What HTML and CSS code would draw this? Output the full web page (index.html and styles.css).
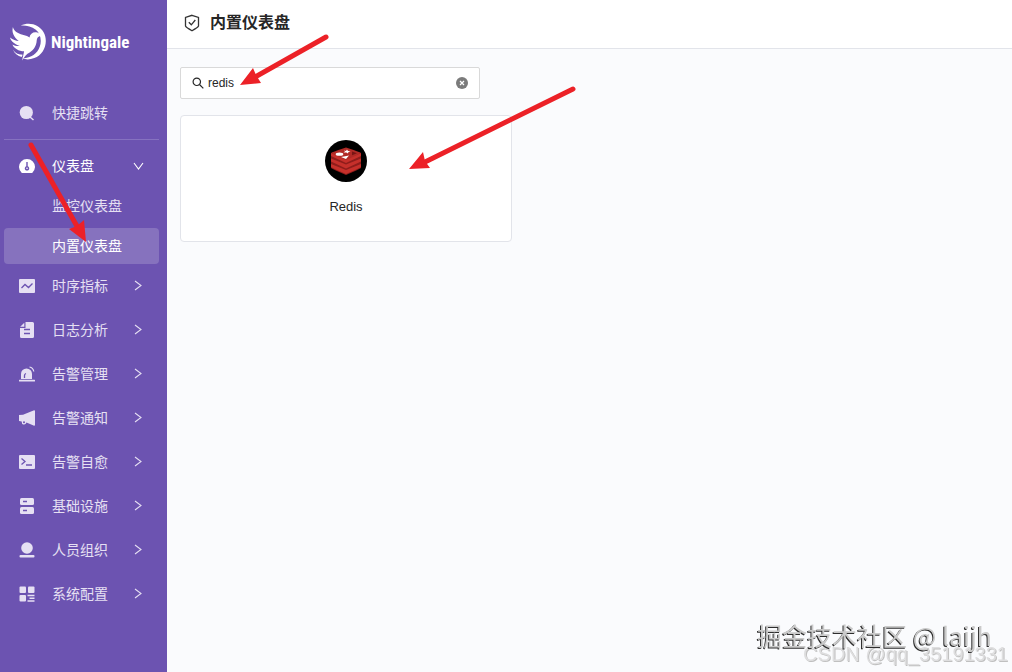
FILE: index.html
```html
<!DOCTYPE html>
<html lang="zh-CN">
<head>
    <meta charset="UTF-8">
    <meta name="viewport" content="width=device-width, initial-scale=1.0">
    <title>内置仪表盘 - Nightingale</title>
    <link rel="stylesheet" href="styles.css">
</head>
<body>
    <!-- Chevron shared by the menu items -->
    <svg class="symbols" aria-hidden="true">
        <symbol id="chevron" viewBox="0 0 12 12">
            <path d="M3 1 L9 5.500 L3 10" fill="none" stroke="currentColor" stroke-width="1.1"/>
        </symbol>
    </svg>

    <div class="layout">
        <!-- Side menu -->
        <aside class="sidebar">
            <a class="logo" href="#">
                <svg class="logo-mark" viewBox="0 0 38 38" aria-hidden="true">
                    <path d="M11 2 C20 -2 30 1 34.500 9 C40 19 35 32 25 35.500 C20 37.500 16 37 13 36 C22 35.500 28 31 30.500 24 C33 17 31 10 26.500 6.500 C22 2.500 16 1.700 11 2 Z"/>
                    <path d="M3 3.500 C4 8 8 10 13 11.500 C17 12.500 18.500 13 20 14.500 C20.500 11 23 9 26 9 C29 9 30 10.500 34 12.500 C30 12.500 28 13.500 27.500 17 C27 25 23 28.500 18 31 C15.500 33 14 35.500 12.500 38 C13 34.500 14 31.500 14.500 28.500 C9 28.500 4 25.500 2.500 21.500 C5 23 8 23.300 10 23 C5 21.500 1 18.500 0 14.500 C3 17 6 18 9 18 C4 14 1.500 9 3 3.500 Z"/>
                    <path d="M3 27 C6 31 9 32 13 32 L12 34.500 C8 33.500 5 31 3 27 Z"/>
                </svg>
                <span class="logo-text">Nightingale</span>
            </a>

            <nav>
                <div class="quick">
                    <button class="menu-item" type="button">
                        <svg class="icon" viewBox="0 0 16 16"><circle cx="7.300" cy="7.500" r="6.600"/><path d="M11 12 L14.500 15" stroke="currentColor" stroke-width="1.500"/></svg>
                        <span>快捷跳转</span>
                    </button>
                </div>

                <ul class="menu">
                    <li class="open">
                        <button class="menu-item active" type="button" aria-expanded="true">
                            <svg class="icon" viewBox="0 0 16 16"><path fill-rule="evenodd" d="M2.800 15 A8 8 0 1 1 13.200 15 Z M7.300 4 V8.300 A2.200 2.200 0 1 0 8.700 8.300 V4 Z"/><circle cx="8" cy="10.300" r="0.800"/></svg>
                            <span>仪表盘</span>
                            <svg class="arrow arrow-down"><use href="#chevron"/></svg>
                        </button>
                        <ul class="submenu">
                            <li><a href="#">监控仪表盘</a></li>
                            <li><a class="selected" href="#" aria-current="page">内置仪表盘</a></li>
                        </ul>
                    </li>
                    <li>
                        <button class="menu-item" type="button">
                            <svg class="icon" viewBox="0 0 16 16"><rect y="1" width="16" height="14" rx="1"/><path class="cut" d="M2.500 10 L6 6.500 L9.500 9.500 L13.500 5.500"/></svg>
                            <span>时序指标</span>
                            <svg class="arrow"><use href="#chevron"/></svg>
                        </button>
                    </li>
                    <li>
                        <button class="menu-item" type="button">
                            <svg class="icon" viewBox="0 0 16 16"><path d="M6.500 0 H13.500 Q15 0 15 1.500 V14.500 Q15 16 13.500 16 H2.500 Q1 16 1 14.500 V6 H6.500 Z"/><path d="M5.300 0.700 V4.800 H1.200 Z"/><path class="cut" d="M5 7.500 H11 M5 11.500 H11"/></svg>
                            <span>日志分析</span>
                            <svg class="arrow"><use href="#chevron"/></svg>
                        </button>
                    </li>
                    <li>
                        <button class="menu-item" type="button">
                            <svg class="icon" viewBox="0 0 16 16"><path d="M2 13 V8 A5.500 5.500 0 0 1 13 8 V13 Z"/><rect y="13.700" width="16" height="1.800" rx="0.500"/><path d="M10.500 1 Q14 1.500 14.800 5.500" fill="none" stroke="currentColor" stroke-width="1.200"/><path class="cut" d="M5.500 12 V9.500 Q5.500 8 7 7.500"/></svg>
                            <span>告警管理</span>
                            <svg class="arrow"><use href="#chevron"/></svg>
                        </button>
                    </li>
                    <li>
                        <button class="menu-item" type="button">
                            <svg class="icon" viewBox="0 0 16 16"><path d="M0 5 L4 4.800 L14.500 0.500 Q16 0 16 1.200 V14.800 Q16 16 14.500 15.500 L7.500 12.500 Q6.500 15 4.500 14.500 Q2.500 14 2.700 11.500 L0 11 Z"/><circle class="hole" cx="5" cy="12.300" r="1"/></svg>
                            <span>告警通知</span>
                            <svg class="arrow"><use href="#chevron"/></svg>
                        </button>
                    </li>
                    <li>
                        <button class="menu-item" type="button">
                            <svg class="icon" viewBox="0 0 16 16"><rect y="1" width="16" height="14" rx="1"/><path class="cut" d="M2.500 4.500 L6 7.500 L2.500 10.500 M7 11 H13"/></svg>
                            <span>告警自愈</span>
                            <svg class="arrow"><use href="#chevron"/></svg>
                        </button>
                    </li>
                    <li>
                        <button class="menu-item" type="button">
                            <svg class="icon" viewBox="0 0 16 16"><rect x="1" width="14" height="7" rx="1.500"/><rect x="1" y="9" width="14" height="7" rx="1.500"/><path class="cut" d="M4 3.500 H8 M4 12.500 H8"/></svg>
                            <span>基础设施</span>
                            <svg class="arrow"><use href="#chevron"/></svg>
                        </button>
                    </li>
                    <li>
                        <button class="menu-item" type="button">
                            <svg class="icon" viewBox="0 0 16 16"><circle cx="8" cy="6" r="5.800"/><rect x="0.500" y="13" width="15" height="2.500" rx="1"/></svg>
                            <span>人员组织</span>
                            <svg class="arrow"><use href="#chevron"/></svg>
                        </button>
                    </li>
                    <li>
                        <button class="menu-item" type="button">
                            <svg class="icon" viewBox="0 0 16 16"><rect x="0.500" y="0.500" width="6.500" height="6.500" rx="1"/><rect x="9" y="0.500" width="6.500" height="6.500" rx="1"/><rect x="0.500" y="9" width="6.500" height="6.500" rx="1"/><path d="M8.500 9.500 H15.500 M10.500 12.200 H15.500 M8.500 15 H15.500" stroke="currentColor" stroke-width="1.400"/></svg>
                            <span>系统配置</span>
                            <svg class="arrow"><use href="#chevron"/></svg>
                        </button>
                    </li>
                </ul>
            </nav>
        </aside>

        <main class="main">
            <header class="page-header">
                <svg class="header-icon" viewBox="0 0 16 18" aria-hidden="true">
                    <path d="M8 1.300 L14.500 3.500 V12 Q14 13.300 8 16.700 Q2 13.300 1.500 12 V3.500 Z"/>
                    <path d="M4.800 8.300 L7.300 10.800 L11.300 6"/>
                </svg>
                <h1>内置仪表盘</h1>
            </header>

            <div class="content">
                <form class="search">
                    <svg class="search-icon" viewBox="0 0 12 12" aria-hidden="true">
                        <circle cx="4.800" cy="4.800" r="3.700"/>
                        <path d="M7.500 7.500 L11.300 11.300"/>
                    </svg>
                    <input type="text" value="redis" aria-label="搜索">
                    <button type="button" class="clear" aria-label="清除">
                        <svg viewBox="0 0 12 12">
                            <circle cx="6" cy="6" r="6"/>
                            <path d="M4 4 L8 8 M8 4 L4 8"/>
                        </svg>
                    </button>
                </form>

                <div class="cards">
                    <a class="card" href="#">
                        <svg class="card-logo" viewBox="0 0 42 42" aria-hidden="true">
                            <circle cx="21" cy="21" r="21"/>
                            <path fill="#8f1d1b" d="M6 13 L21 19 L36 13 V28 Q35 29 21 35 Q7 29 6 28 Z"/>
                            <path fill="#c6302b" d="M6 24 L21 30 L36 24 V27 Q35 28 21 34 Q7 28 6 27 Z"/>
                            <path fill="#c6302b" d="M6 18.500 L21 24.500 L36 18.500 V21.500 L21 28.500 L6 21.500 Z"/>
                            <path fill="#c6302b" d="M6 13 L21 19 L36 13 V16 L21 23 L6 16 Z"/>
                            <path fill="#b12a26" d="M6 13 Q7 12 21 7.500 Q35 12 36 13 Q35 14 21 20 Q7 14 6 13 Z"/>
                            <ellipse cx="14.500" cy="14.200" rx="3.800" ry="1.600" fill="#fff"/>
                            <path fill="#fff" d="M19 10.500 L21 11 L22 9.500 L23 11 L25.500 11.300 L23.300 12.200 L23 13.500 L21.300 12.400 L18.500 12.500 L20 11.600 Z M16 17 L24 15.500 L21 19 Z"/>
                            <path fill="#791514" d="M27 11.500 L32 13.200 L27 15.300 Z"/>
                        </svg>
                        <span>Redis</span>
                    </a>
                </div>
            </div>
        </main>
    </div>

    <!-- Arrows drawn over the page -->
    <svg class="arrows" width="600" height="260" aria-hidden="true">
        <path class="shaft" d="M326 37 L255 77 M573 89 L423 163 M31 145 L78 228"/>
        <path class="head" d="M240 85 L253 68 L256 75 L261 83 Z M409 169 L423 152 L425 161 L430 168 Z M86 242 L69 229 L77 226 L84 220 Z"/>
    </svg>

    <div class="watermark">
        <span class="watermark-main">掘金技术社区 @ laijh</span>
        <span class="watermark-sub">CSDN @qq_35191331</span>
    </div>
</body>
</html>
```
FILE: styles.css
```css
* {
    box-sizing: border-box;
}

body {
    margin: 0;
    font-family: "Liberation Sans", "Noto Sans CJK SC", sans-serif;
    font-size: 14px;
    color: #262626;
    background-color: #fafbfd;
}

ul {
    margin: 0;
    padding: 0;
    list-style: none;
}

a {
    color: inherit;
    text-decoration: none;
}

button {
    font: inherit;
    border: 0;
    background: none;
    cursor: pointer;
}

.symbols {
    display: none;
}

.layout {
    display: flex;
    min-height: 100vh;
}

/* Side menu */
.sidebar {
    flex: none;
    width: 167px;
    padding: 0 8px 24px 4px;
    background-color: #6c53b1;
    color: #e6e0f3;
}

.logo {
    display: flex;
    align-items: center;
    gap: 4px;
    padding: 23px 0 0 6px;
    color: #fff;
}

.logo-mark {
    flex: none;
    width: 37px;
    height: 38px;
    fill: #fff;
}

.logo-text {
    font-family: "Liberation Sans Narrow", "Roboto Condensed", Roboto, sans-serif;
    font-size: 17px;
    font-weight: 700;
}

.quick {
    margin: 32px 0 6px;
    padding-bottom: 6px;
    border-bottom: 1px solid #8672c0;
}

.menu {
    display: flex;
    flex-direction: column;
}

.menu > li {
    margin-bottom: 4px;
}

.menu > .open {
    margin-bottom: 0;
}

.menu-item {
    display: flex;
    align-items: center;
    width: 100%;
    height: 40px;
    padding: 0 15px;
    color: inherit;
    line-height: 20px;
    text-align: left;
}

.menu-item span {
    flex: 1;
}

.active {
    color: #fff;
}

.icon {
    flex: none;
    width: 16px;
    height: 16px;
    margin-right: 17px;
    fill: currentColor;
}

.icon .cut {
    fill: none;
    stroke: #6c53b1;
    stroke-width: 1.3;
}

.icon .hole {
    fill: #6c53b1;
}

.arrow {
    width: 12px;
    height: 12px;
}

.arrow-down {
    transform: rotate(90deg);
}

.submenu li {
    padding: 2px 0;
}

.submenu a {
    display: block;
    padding-left: 48px;
    line-height: 36px;
    border-radius: 4px;
}

.submenu .selected {
    background-color: #8672be;
    color: #fff;
}

/* Page */
.main {
    flex: 1;
    min-width: 0;
}

.page-header {
    display: flex;
    align-items: center;
    gap: 10px;
    height: 49px;
    padding: 0 17px 2px;
    background-color: #fff;
    border-bottom: 1px solid #e2e4ea;
}

.page-header h1 {
    margin: 0;
    font-size: 16px;
    line-height: 24px;
}

.header-icon {
    width: 16px;
    height: 18px;
    fill: none;
    stroke: #333;
    stroke-width: 1.3;
}

.content {
    padding: 18px 13px;
}

.search {
    display: flex;
    align-items: center;
    max-width: 300px;
    height: 32px;
    padding: 0 11px;
    background-color: #fff;
    border: 1px solid #d9d9d9;
    border-radius: 2px;
}

.search-icon {
    width: 12px;
    height: 12px;
    fill: none;
    stroke: #262626;
    stroke-width: 1.2;
}

.search input {
    flex: 1;
    min-width: 0;
    padding: 0 4px;
    border: 0;
    outline: 0;
    font: inherit;
    font-size: 12px;
    color: inherit;
    background: none;
}

.clear {
    display: flex;
    padding: 0;
}

.clear svg {
    width: 12px;
    height: 12px;
    fill: #7b7b7b;
    stroke: #fff;
    stroke-width: 1.2;
}

.clear circle {
    stroke: none;
}

.cards {
    display: grid;
    grid-template-columns: repeat(auto-fill, minmax(280px, 332px));
    gap: 16px;
    margin-top: 16px;
}

.card {
    display: flex;
    flex-direction: column;
    align-items: center;
    gap: 16px;
    padding: 24px 16px 25px;
    font-size: 13px;
    line-height: 18px;
    background-color: #fff;
    border: 1px solid #e2e4ea;
    border-radius: 4px;
}

.card-logo {
    width: 42px;
    height: 42px;
}

/* Overlays */
.arrows {
    position: absolute;
    top: 0;
    left: 0;
    pointer-events: none;
}

.arrows .shaft {
    fill: none;
    stroke: #ec2127;
    stroke-width: 5;
    stroke-linecap: round;
}

.arrows .head {
    fill: #ec2127;
}

.watermark {
    position: fixed;
    right: 4px;
    bottom: 6px;
    display: flex;
    flex-direction: column;
    align-items: flex-end;
    pointer-events: none;
}

.watermark-main {
    z-index: 1;
    padding-right: 16px;
    font-family: "Noto Sans CJK SC", sans-serif;
    font-size: 25px;
    line-height: 32px;
    color: #cacaca;
    text-shadow: -1px 1px 0 #2e2e2e;
}

.watermark-sub {
    margin-top: -9px;
    font-size: 20px;
    line-height: 24px;
    color: #dededf;
    text-shadow: 1px 1px 0 #c0c0c0;
}
```
